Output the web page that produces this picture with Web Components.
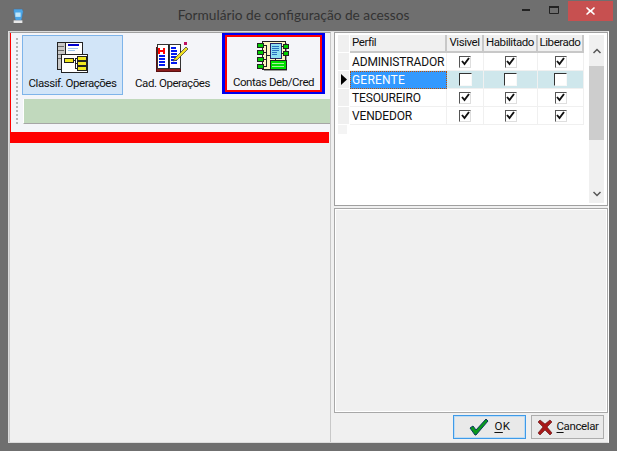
<!DOCTYPE html>
<html>
<head>
<meta charset="utf-8">
<style>
html, body { margin: 0; padding: 0; background: #6f6f6f; }
body { width: 617px; height: 451px; overflow: hidden; font-family: "Noto Sans", sans-serif; }
</style>
</head>
<body>
<config-window caption="Formulário de configuração de acessos">
  <div slot="left" style="display:contents">
    <side-toolbar>
      <tool-button label="Classif. Operações" selected>
        <svg width="32" height="32" viewBox="0 0 32 32" shape-rendering="crispEdges">
          <rect x="1" y="1" width="8" height="27" fill="#c8c8c8" stroke="#222"/>
          <path d="M2 5h6M2 9h6M2 13h6M2 17h6" stroke="#666"/>
          <rect x="9" y="1" width="17" height="14" fill="#fff" stroke="#222"/>
          <rect x="12" y="3" width="11" height="2" fill="#0000d0"/>
          <path d="M12 7h10M12 9h7" stroke="#9cc4ec"/>
          <rect x="5" y="13" width="26" height="18" fill="#fff" stroke="#222"/>
          <rect x="8" y="17" width="9" height="4" fill="#f0e820" stroke="#222"/>
          <rect x="21" y="15" width="9" height="4" fill="#f0e820" stroke="#222"/>
          <rect x="21" y="20" width="9" height="4" fill="#f0e820" stroke="#222"/>
          <rect x="21" y="25" width="9" height="4" fill="#f0e820" stroke="#222"/>
          <path d="M17 19h2M19 17v10M19 17h2M19 22h2M19 27h2" stroke="#222" fill="none"/>
        </svg>
      </tool-button>
      <tool-button label="Cad. Operações">
        <svg width="34" height="32" viewBox="0 0 34 32" shape-rendering="crispEdges">
          <rect x="1" y="6" width="24" height="24" fill="#8c1c1c" stroke="#5a1010"/>
          <rect x="2" y="3" width="11" height="24" fill="#fff" stroke="#333"/>
          <rect x="14" y="3" width="11" height="24" fill="#fff" stroke="#333"/>
          <path d="M13 4v24" stroke="#222"/>
          <path d="M4 7v6M9 7v6M4 10h5" stroke="#f00" stroke-width="2" fill="none"/>
          <path d="M4 15h6M4 18h6M4 21h6M4 24h6M16 7h5M16 10h6M16 13h6M16 16h6M16 19h6M16 22h6" stroke="#0018f0" stroke-width="2"/>
          <path d="M20 17l11-11 2 2-11 11-4 1z" fill="#f0e020" stroke="#333" stroke-width=".7" shape-rendering="auto"/>
          <rect x="29" y="1" width="3" height="3" fill="#c01060"/>
        </svg>
      </tool-button>
      <tool-button label="Contas Deb/Cred" marked>
        <svg width="32" height="32" viewBox="0 0 32 32" shape-rendering="crispEdges">
          <rect x="5" y="1" width="23" height="28" fill="#fdf6c0" stroke="#222"/>
          <path d="M29 3v27H7" stroke="#999" fill="none"/>
          <rect x="13" y="3" width="11" height="15" fill="#8ee0f0" stroke="#226"/>
          <path d="M15 6h7M15 8h7M15 10h7M15 12h5M15 14h5" stroke="#2a70c0"/>
          <rect x="13" y="20" width="16" height="9" fill="#00e000" stroke="#222"/>
          <path d="M15 23h12M15 26h12" stroke="#a8f0a0"/>
          <g fill="#00d000" stroke="#222">
            <rect x="0" y="3" width="6" height="4"/><rect x="0" y="10" width="6" height="4"/><rect x="0" y="17" width="6" height="4"/><rect x="0" y="24" width="6" height="4"/>
            <rect x="26" y="4" width="5" height="4"/><rect x="26" y="11" width="5" height="4"/>
          </g>
          <path d="M6 5h3v21H6M6 12h3M6 19h3M9 15h4M24 6h2M24 13h2M18 18v2" stroke="#222" fill="none"/>
        </svg>
      </tool-button>
    </side-toolbar>
  </div>
  <perm-grid slot="grid"></perm-grid>
  <dlg-button slot="actions" mnemonic="O" rest="K" focused>
    <svg width="22" height="18" viewBox="0 0 22 18"><path d="M2 10l3-2 3 4L18 1l2 2L8 17h-1z" fill="#0a9a1a" stroke="#0a3a60" stroke-width="1"/></svg>
  </dlg-button>
  <dlg-button slot="actions" mnemonic="C" rest="ancelar">
    <svg width="16" height="16" viewBox="0 0 16 16"><path d="M1 3l2-2 5 4 5-4 2 2-5 5 5 6-2 2-5-5-5 5-2-2 5-6z" fill="#a81818" stroke="#5a1010" stroke-width=".6"/></svg>
  </dlg-button>
</config-window>

<script>
class ConfigWindow extends HTMLElement {
  constructor() {
    super();
    this.attachShadow({ mode: "open" });
    this.shadowRoot.innerHTML = `
    <style>
    :host { display: flex; flex-direction: column; width: 617px; height: 451px; box-sizing: border-box; padding: 0 8px 8px; }
    .title { height: 31px; flex: none; display: flex; align-items: center; color: #333; font: 13.7px/1 Lato, sans-serif; }
    .title .app { width: 14px; height: 18px; margin: 0 0 0 3px; flex: none; }
    .title .text { flex: 1; text-align: center; padding-left: 51px; white-space: nowrap; padding-bottom: 1px; }
    .ctl { display: flex; align-self: flex-start; flex: none; }
    .ctl div { height: 20px; display: flex; align-items: center; justify-content: center; }
    .min { width: 29px; }
    .max { width: 28px; }
    .close { width: 45px; background: #c75050; margin-right: -4px; margin-top: 1px; }
    .client { flex: 1; min-height: 0; background: #f0f0f0; display: grid; grid-template-columns: 323px 1fr; border: 1px solid #dcdcdc; border-right-color: #fff; box-sizing: border-box; }
    .left { display: flex; flex-direction: column; border: 1px solid #c8c8c8; border-bottom: 0; border-top-color: #a0a0a0; margin-right: 1px; box-sizing: border-box; }
    .right { display: flex; flex-direction: column; padding: 0 0 2px 2px; min-width: 0; }
    .lower { flex: 1; margin: 2px 0 0 0; border: 1px solid #a8a8a8; box-shadow: inset 0 0 0 1px #fff; }
    .actions { display: flex; justify-content: flex-end; gap: 5px; padding: 2px 4px 0 0; height: 27px; box-sizing: border-box; }
    </style>
    <div class="title">
      <svg class="app" viewBox="0 0 16 18">
        <path d="M3 1h10l1 3-2 10H5L3 4z" fill="#4aa6e8" stroke="#5a6a80" stroke-width=".7"/>
        <path d="M5 5h6v5H5z" fill="#bfe6fa"/>
        <path d="M3 14h10v3H3z" fill="#e8e8e8"/>
      </svg>
      <div class="text">${this.getAttribute("caption")}</div>
      <div class="ctl">
        <div class="min"><svg width="8" height="2"><rect width="8" height="2" fill="#222"/></svg></div>
        <div class="max"><svg width="10" height="8"><path d="M.5 .5h9v7h-9z" fill="none" stroke="#222"/><rect width="10" height="2" fill="#222"/></svg></div>
        <div class="close"><svg width="9" height="8" viewBox="0 0 9 8"><path d="M1 0l3.500 3L8 0l1 1-3 3 3 3-1 1-3.500-3L1 8 0 7l3-3-3-3z" fill="#fff"/></svg></div>
      </div>
    </div>
    <div class="client">
      <div class="left"><slot name="left"></slot></div>
      <div class="right">
        <slot name="grid"></slot>
        <div class="lower"></div>
        <div class="actions"><slot name="actions"></slot></div>
      </div>
    </div>`;
  }
}

class SideToolbar extends HTMLElement {
  constructor() {
    super();
    this.attachShadow({ mode: "open" });
    this.shadowRoot.innerHTML = `
    <style>
    :host { display: block; background: #f0f0f0; }
    .bar { position: relative; background: #f4f5f9; border-left: 1px solid #f00; height: 99px; box-sizing: border-box; padding: 2px 0 0 5px; display: grid; grid-template-columns: 3px 1fr; column-gap: 3px; }
    .grip { width: 2px; margin: 3px 0 0 0; height: 88px; background: repeating-linear-gradient(#b4b4b4 0 2px, transparent 2px 4px); }
    .row { display: flex; align-items: flex-start; height: 61px; }
    .green { height: 25px; background: #c1d9bd; margin: 3px 0 0 1px; border-bottom: 1px solid #a6a6a6; border-left: 1px solid #fff; box-sizing: border-box; }
    .red { height: 11px; background: #f00; margin-right: 1px; }
    </style>
    <div class="bar">
      <div class="grip"></div>
      <div>
        <div class="row"><slot></slot></div>
        <div class="green"></div>
      </div>
    </div>
    <div class="red"></div>`;
  }
}

class ToolButton extends HTMLElement {
  constructor() {
    super();
    this.attachShadow({ mode: "open" });
    this.shadowRoot.innerHTML = `
    <style>
    :host { display: block; box-sizing: border-box; width: 99px; height: 60px; flex: none; }
    :host([selected]) { width: 101px; }
    :host([selected]) .face { background: #d2e5f8; border-color: #7eb4ea; }
    :host([marked]) { width: 103px; height: 61px; margin-top: -2px; border: 2px solid #0000f0; border-width: 2px 3px; }
    :host([marked]) .face { border: 2px solid #f00; padding-top: 2px; }
    .face { box-sizing: border-box; height: 100%; border: 1px solid transparent; display: flex; flex-direction: column; align-items: center; padding-top: 4px; }
    .ico { height: 34px; display: flex; align-items: center; justify-content: center; margin-right: 2px; }
    .lbl { font: 11.5px/14px Roboto, sans-serif; color: #111; white-space: nowrap; letter-spacing: -.45px; margin-top: 2px; }
    </style>
    <div class="face">
      <div class="ico"><slot></slot></div>
      <div class="lbl">${this.getAttribute("label")}</div>
    </div>`;
  }
}

const PERFIS = [
  ["ADMINISTRADOR", true],
  ["GERENTE", false],
  ["TESOUREIRO", true],
  ["VENDEDOR", true]
];

class PermGrid extends HTMLElement {
  constructor() {
    super();
    this.attachShadow({ mode: "open" });
    const box = (on) => `<span class="chk${on ? " on" : ""}">${on ? '<svg width="9" height="9" viewBox="0 0 9 9"><path d="M1 4l2.500 3L8 1" fill="none" stroke="#111" stroke-width="1.900"/></svg>' : ""}</span>`;
    const rows = PERFIS.map(([nome, on], i) => `
      <div class="row ${i === 1 ? "cur" : ""}">
        <div class="ind">${i === 1 ? '<svg width="6" height="11"><path d="M0 0l6 5.500L0 11z" fill="#000"/></svg>' : ""}</div>
        <div class="c nome">${nome}</div>
        <div class="c m">${box(on)}</div>
        <div class="c m">${box(on)}</div>
        <div class="c m">${box(on)}</div>
      </div>`).join("");
    this.shadowRoot.innerHTML = `
    <style>
    :host { display: flex; height: 174px; flex: none; box-sizing: border-box; border: 1px solid #a0a0a0; box-shadow: inset 0 0 0 1px #fff; background: #fff; padding: 2px 4px 2px 3px; }
    .table { flex: 1; font: 11.5px/1 Roboto, sans-serif; color: #111; letter-spacing: -.45px; }
    .row { display: grid; grid-template-columns: 12px 97px 37px 54px 46px; height: 18px; width: 246px; }
    .head .c { background: #f0f0f0; border-right: 2px solid #c8c8c8; border-bottom: 2px solid #c8c8c8; box-sizing: border-box; display: flex; align-items: center; justify-content: center; white-space: nowrap; }
    .head .c.first { justify-content: flex-start; padding-left: 2px; }
    .ind { background: #f0f0f0; border-bottom: 1px solid #fff; border-right: 1px solid #fff; display: flex; align-items: center; padding-left: 3px; box-sizing: border-box; }
    .c { box-sizing: border-box; border-right: 1px solid #f0f0f0; border-bottom: 1px solid #f0f0f0; display: flex; align-items: center; }
    .nome { font-size: 12px; letter-spacing: -.15px; padding-left: 2px; }
    .m { justify-content: center; }
    .chk { width: 12px; height: 12px; box-sizing: border-box; border: 1px solid; border-color: #555 #dedede #dedede #555; background: #fff; display: flex; align-items: center; justify-content: center; }
    .chk svg { display: block; }
    .chk:not(.on) { width: 13px; height: 13px; border-color: #333 #f8f8f8 #f8f8f8 #333; }
    .cur .m { background: #cfe7ec; }
    .cur .nome { background: #3399ff; color: #fff; border: 1px dotted #c05000; padding-left: 1px; letter-spacing: .2px; }
    .stub { width: 9px; height: 9px; background: #f4f4f4; }
    .sb { width: 15px; margin-left: 5px; background: #f0f0f0; display: flex; flex-direction: column; flex: none; }
    .arr { height: 31px; flex: none; display: flex; align-items: center; justify-content: center; }
    .thumb { height: 74px; background: #cdcdcd; flex: none; }
    .track { flex: 1; }
    </style>
    <div class="table">
      <div class="row head">
        <div class="ind"></div><div class="c first">Perfil</div><div class="c">Visivel</div><div class="c">Habilitado</div><div class="c">Liberado</div>
      </div>
      ${rows}
      <div class="stub"></div>
    </div>
    <div class="sb">
      <div class="arr"><svg width="8" height="6"><path d="M.5 5L4 1.500 7.500 5" fill="none" stroke="#555" stroke-width="1.500"/></svg></div>
      <div class="thumb"></div>
      <div class="track"></div>
      <div class="arr" style="height:18px"><svg width="8" height="6"><path d="M.5 1L4 4.500 7.500 1" fill="none" stroke="#555" stroke-width="1.500"/></svg></div>
    </div>`;
  }
}

class DlgButton extends HTMLElement {
  constructor() {
    super();
    this.attachShadow({ mode: "open" });
    this.shadowRoot.innerHTML = `
    <style>
    :host { display: flex; width: 73px; height: 24px; box-sizing: border-box; border: 1px solid #adadad; background: #e9e9e9; align-items: center; justify-content: center; gap: 4px; font: 11.5px/1 Roboto, sans-serif; color: #111; letter-spacing: -.4px; }
    :host([focused]) { border-color: #3f9ae8; box-shadow: inset 0 0 0 1px #bcdcf5; gap: 4px; letter-spacing: .5px; }
    u { text-underline-offset: 2px; }
    ::slotted(svg) { display: block; }
    </style>
    <slot></slot><span><u>${this.getAttribute("mnemonic")}</u>${this.getAttribute("rest")}</span>`;
  }
}

customElements.define("config-window", ConfigWindow);
customElements.define("side-toolbar", SideToolbar);
customElements.define("tool-button", ToolButton);
customElements.define("perm-grid", PermGrid);
customElements.define("dlg-button", DlgButton);
</script>
</body>
</html>
